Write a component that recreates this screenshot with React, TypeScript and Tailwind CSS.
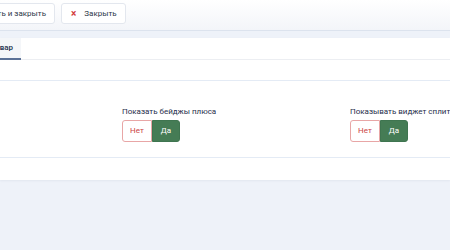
import React from "react";

function Toggle() {
  return (
    <div className="flex h-[22px] w-[58px] text-[8px]">
      <div className="flex w-[30px] items-center justify-center rounded-l-[3px] border border-[#e8a6a6] bg-white text-[#cc4446]">
        Нет
      </div>
      <div className="flex w-[28px] items-center justify-center rounded-r-[3px] border border-[#3f7550] bg-[#457c55] text-white">
        Да
      </div>
    </div>
  );
}

export default function App() {
  return (
    <div
      className="h-[250px] w-[450px] overflow-hidden bg-[#eef2f9]"
      style={{ fontFamily: "Roboto, 'Noto Sans', sans-serif" }}
    >
      <div className="flex h-[31px] items-start border-b border-[#dce3ee] bg-gradient-to-b from-white to-[#f3f5f9] pt-[3px]">
        <div className="flex w-[55px] shrink-0 justify-end">
          <div className="flex h-[21px] shrink-0 items-center whitespace-nowrap rounded-[3px] border border-[#e3e7ee] bg-white pl-[10px] pr-[8px] text-[8px] text-[#2e3849]">
            Сохранить и закрыть
          </div>
        </div>
        <div className="ml-[6px] flex h-[21px] items-center rounded-[3px] border border-[#e3e7ee] bg-white pl-[9px] pr-[8px] text-[8px] text-[#2e3849]">
          <span className="text-[10px] font-bold leading-none text-[#d23b3b]">×</span>
          <span className="ml-[8px]">Закрыть</span>
        </div>
      </div>
      <div className="mt-[7px] bg-white shadow-[0_1px_2px_rgba(30,50,90,0.06)]">
        <div className="flex h-[22px] border-b border-[#eceef2]">
          <div className="-mb-px flex w-[21px] shrink-0 justify-end">
            <div className="flex shrink-0 items-center border-b-2 border-[#5b7196] bg-[#f4f6f9] pl-[8px] pr-[8px] text-[8px] font-semibold text-[#2c3a55]">
              Товар
            </div>
          </div>
        </div>
        <div className="h-[21px] border-b border-[#e4ebf5]"></div>
        <div className="flex h-[77px] border-b border-[#e4ebf5] pt-[26px]">
          <div className="-ml-[106px] grid grid-cols-[228px_228px_228px]">
            <div></div>
            <div className="flex flex-col gap-[3px]">
              <div className="whitespace-nowrap text-[8px] leading-[10px] text-[#1f2e4b]">Показать бейджы плюса</div>
              <Toggle />
            </div>
            <div className="flex flex-col gap-[3px]">
              <div className="whitespace-nowrap text-[8px] leading-[10px] text-[#1f2e4b]">Показывать виджет сплита</div>
              <Toggle />
            </div>
          </div>
        </div>
        <div className="h-[22px]"></div>
      </div>
    </div>
  );
}
